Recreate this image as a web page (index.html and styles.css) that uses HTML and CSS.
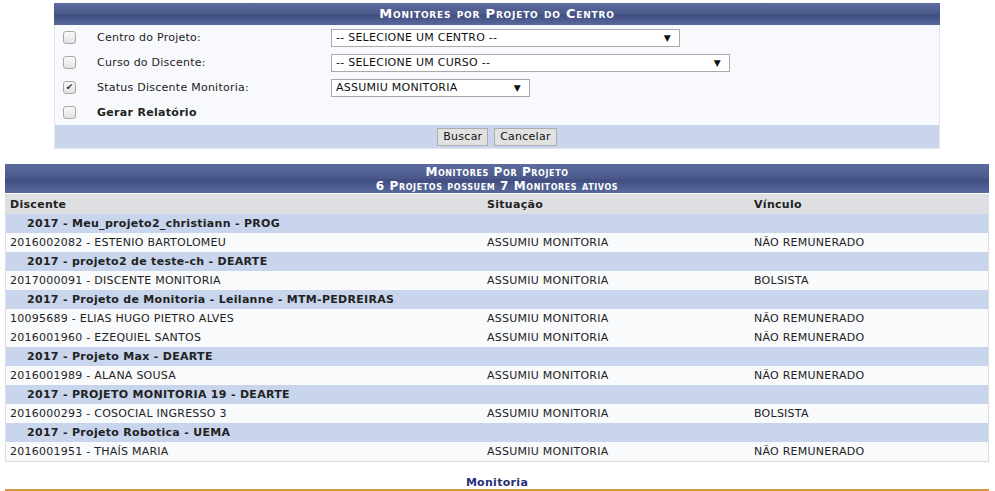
FILE: index.html
```html
<!DOCTYPE html>
<html lang="pt-BR">
<head>
    <meta charset="UTF-8">
    <title>Monitores por Projeto do Centro</title>
    <link rel="stylesheet" href="styles.css">
</head>
<body>
    <div class="page">
        <table class="formulario">
            <caption>Monitores por Projeto do Centro</caption>
            <tbody>
                <tr>
                    <td class="check"><span class="checkbox"></span></td>
                    <td class="label">Centro do Projeto:</td>
                    <td><span class="select w-centro">-- SELECIONE UM CENTRO --</span></td>
                </tr>
                <tr>
                    <td class="check"><span class="checkbox"></span></td>
                    <td class="label">Curso do Discente:</td>
                    <td><span class="select w-curso">-- SELECIONE UM CURSO --</span></td>
                </tr>
                <tr>
                    <td class="check"><span class="checkbox checked">&#10004;</span></td>
                    <td class="label">Status Discente Monitoria:</td>
                    <td><span class="select w-status">ASSUMIU MONITORIA</span></td>
                </tr>
                <tr>
                    <td class="check"><span class="checkbox"></span></td>
                    <td class="label bold" colspan="2">Gerar Relatório</td>
                </tr>
            </tbody>
            <tfoot>
                <tr>
                    <td colspan="3">
                        <button type="button">Buscar</button>
                        <button type="button">Cancelar</button>
                    </td>
                </tr>
            </tfoot>
        </table>

        <table class="listagem">
            <caption>Monitores Por Projeto<br>6 Projetos possuem 7 Monitores ativos</caption>
            <thead>
                <tr>
                    <th class="col-discente">Discente</th>
                    <th class="col-situacao">Situação</th>
                    <th>Vínculo</th>
                </tr>
            </thead>
            <tbody>
                <tr class="projeto"><td colspan="3">2017 - Meu_projeto2_christiann - PROG</td></tr>
                <tr><td>2016002082 - ESTENIO BARTOLOMEU</td><td>ASSUMIU MONITORIA</td><td>NÃO REMUNERADO</td></tr>
                <tr class="projeto"><td colspan="3">2017 - projeto2 de teste-ch - DEARTE</td></tr>
                <tr><td>2017000091 - DISCENTE MONITORIA</td><td>ASSUMIU MONITORIA</td><td>BOLSISTA</td></tr>
                <tr class="projeto"><td colspan="3">2017 - Projeto de Monitoria - Leilanne - MTM-PEDREIRAS</td></tr>
                <tr><td>10095689 - ELIAS HUGO PIETRO ALVES</td><td>ASSUMIU MONITORIA</td><td>NÃO REMUNERADO</td></tr>
                <tr><td>2016001960 - EZEQUIEL SANTOS</td><td>ASSUMIU MONITORIA</td><td>NÃO REMUNERADO</td></tr>
                <tr class="projeto"><td colspan="3">2017 - Projeto Max - DEARTE</td></tr>
                <tr><td>2016001989 - ALANA SOUSA</td><td>ASSUMIU MONITORIA</td><td>NÃO REMUNERADO</td></tr>
                <tr class="projeto"><td colspan="3">2017 - PROJETO MONITORIA 19 - DEARTE</td></tr>
                <tr><td>2016000293 - COSOCIAL INGRESSO 3</td><td>ASSUMIU MONITORIA</td><td>BOLSISTA</td></tr>
                <tr class="projeto"><td colspan="3">2017 - Projeto Robotica - UEMA</td></tr>
                <tr><td>2016001951 - THAÍS MARIA</td><td>ASSUMIU MONITORIA</td><td>NÃO REMUNERADO</td></tr>
            </tbody>
        </table>

        <div class="rodape">Monitoria</div>
    </div>
</body>
</html>
```

FILE: styles.css
```css
body {
    margin: 0;
    background-color: #fff;
    font-family: "DejaVu Sans", Verdana, sans-serif;
    font-size: 11px;
    letter-spacing: 0.25px;
    color: #222;
}
.page {
    width: 984px;
    padding: 3px 0 0 5px;
}
table {
    border-collapse: collapse;
}
caption {
    color: #fff;
    font-weight: bold;
    font-variant: small-caps;
    text-align: center;
    background: linear-gradient(to bottom, #5d6c9f 0%, #4a5889 50%, #404e82 55%, #5a699b 100%);
}

/* formulario de busca */
.formulario {
    width: 886px;
    margin: 0 auto;
    background-color: #f8f9fc;
    border: 1px solid #e4e6ec;
    border-top: none;
}
.formulario caption {
    height: 22px;
    line-height: 22px;
    font-size: 13px;
    letter-spacing: 0.8px;
}
.formulario tbody td {
    height: 25px;
    padding: 0;
}
.formulario td.check {
    width: 34px;
    padding-left: 8px;
}
.formulario td.label {
    width: 234px;
}
.bold {
    font-weight: bold;
    letter-spacing: 0.3px;
}
.checkbox {
    display: block;
    width: 11px;
    height: 11px;
    border: 1px solid #a8a8a8;
    border-radius: 3px;
    background: linear-gradient(to bottom, #fafafa, #e3e3e3);
    font-size: 9px;
    line-height: 11px;
    text-align: center;
    letter-spacing: 0;
    color: #333;
}
.select {
    position: relative;
    display: block;
    height: 16px;
    line-height: 16px;
    padding-left: 4px;
    border: 1px solid #a9a9a9;
    background-color: #fff;
    color: #111;
}
.select::after {
    content: '\25BC';
    position: absolute;
    right: 8px;
    top: 0;
    font-size: 9px;
    color: #111;
}
.w-centro { width: 343px; }
.w-curso { width: 393px; }
.w-status { width: 193px; }
.formulario tfoot td {
    height: 23px;
    padding: 0;
    text-align: center;
    background-color: #c8d5ec;
}
button {
    font-family: "DejaVu Sans", Verdana, sans-serif;
    font-size: 11px;
    letter-spacing: 0.25px;
    height: 18px;
    padding: 0 5px;
    margin: 0 1px;
    border: 1px solid #adadad;
    background-color: #e1e1e1;
    color: #111;
}

/* listagem */
.listagem {
    width: 984px;
    margin-top: 15px;
    border: 1px solid #dcdde2;
    border-top: none;
}
.listagem caption {
    height: 30px;
    line-height: 14px;
    padding-top: 1px;
    box-sizing: border-box;
    border-bottom: 1px solid #fff;
    font-size: 12px;
    letter-spacing: 0.6px;
}
.listagem th {
    height: 20px;
    padding: 0 4px;
    text-align: left;
    background-color: #dedfe3;
    color: #222;
    letter-spacing: 0.3px;
}
.listagem th.col-discente { width: 469px; }
.listagem th.col-situacao { width: 259px; }
.listagem td {
    height: 19px;
    padding: 0 4px;
    background-color: #f9fafc;
}
.listagem tr.projeto td {
    padding-left: 21px;
    font-weight: bold;
    letter-spacing: 0.3px;
    background-color: #c8d5ec;
}

.rodape {
    margin-top: 14px;
    line-height: 13px;
    text-align: center;
    font-weight: bold;
    letter-spacing: 0.3px;
    color: #262f78;
    border-bottom: 3px solid #d99a3e;
}
```
